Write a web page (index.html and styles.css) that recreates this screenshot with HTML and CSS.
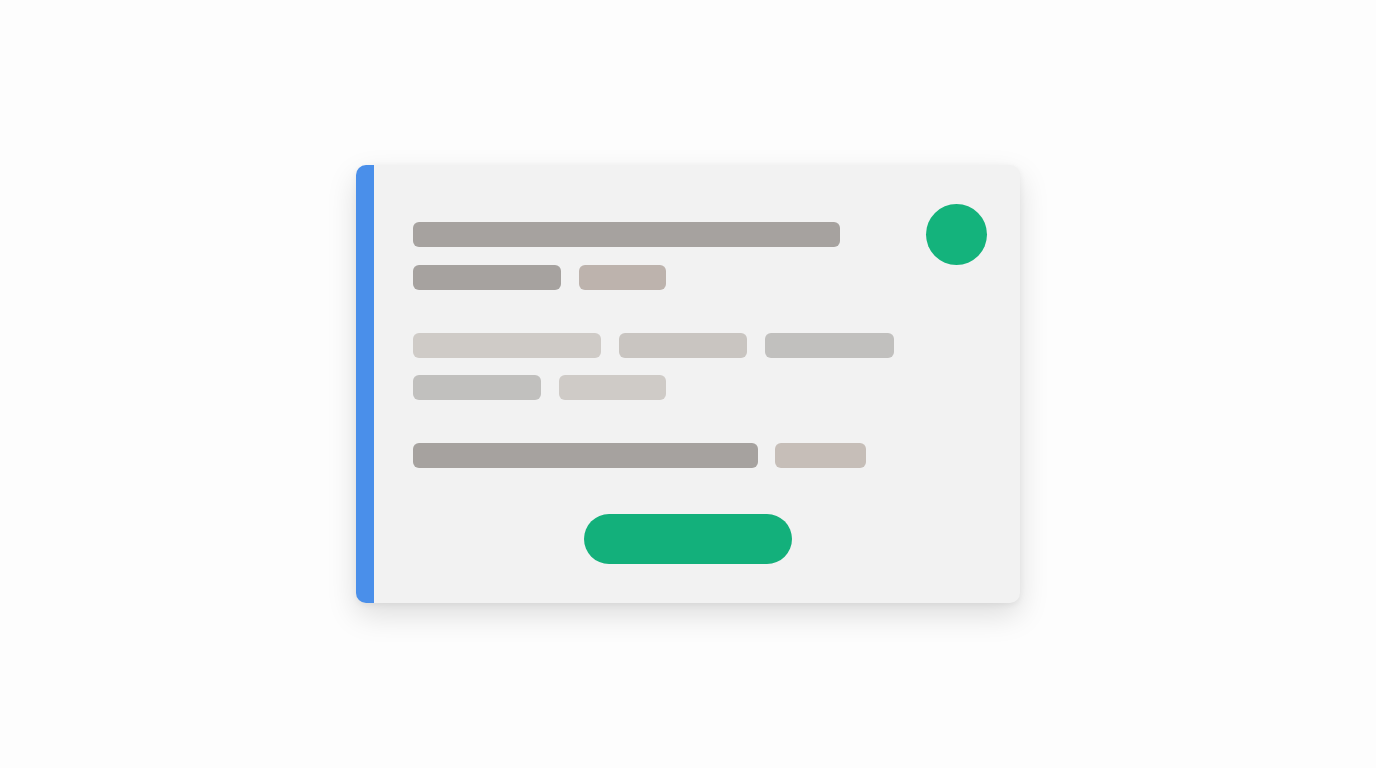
FILE: index.html
```html
<!DOCTYPE html>
<html lang="en">
<head>
<meta charset="utf-8">
<title>Card</title>
<link rel="stylesheet" href="styles.css">
</head>
<body>
<div class="stage">
  <div class="card">
    <div class="card-body">
      <div class="header">
        <div class="group head-group">
          <div class="row"><span class="bar dark" style="width:427px"></span></div>
          <div class="row">
            <span class="bar dark" style="width:148px"></span>
            <span class="bar tan" style="width:87px"></span>
          </div>
        </div>
        <div class="avatar"></div>
      </div>
      <div class="group tags">
        <div class="row">
          <span class="bar light" style="width:188px"></span>
          <span class="bar light2" style="width:128px"></span>
          <span class="bar grey" style="width:129px"></span>
        </div>
        <div class="row tight">
          <span class="bar grey" style="width:128px"></span>
          <span class="bar light" style="width:107px"></span>
        </div>
      </div>
      <div class="row footer-row">
        <span class="bar dark" style="width:345px"></span>
        <span class="bar tan2" style="width:91px"></span>
      </div>
      <div class="actions">
        <button class="btn" type="button" aria-label="Action"></button>
      </div>
    </div>
  </div>
</div>
</body>
</html>
```

FILE: styles.css
```css
* { box-sizing: border-box; }
html, body {
  margin: 0;
  padding: 0;
  background: #fdfdfd;
  font-family: "Inter", "Liberation Sans", sans-serif;
}
.stage {
  width: 1376px;
  height: 768px;
  display: flex;
  align-items: flex-start;
  justify-content: flex-start;
  padding: 165px 0 0 356px;
}
.card {
  width: 664px;
  height: 438px;
  background: #f2f2f2;
  border-left: 18px solid #4a8fea;
  border-radius: 10px;
  box-shadow: 0 12px 30px rgba(0, 0, 0, 0.13), 0 2px 6px rgba(0, 0, 0, 0.06);
}
.card-body {
  padding: 39px 33px 39px 39px;
  display: flex;
  flex-direction: column;
}
.header {
  display: flex;
  justify-content: space-between;
  align-items: flex-start;
}
.group {
  display: flex;
  flex-direction: column;
  gap: 18px;
}
.head-group { margin-top: 18px; }
.tags { margin-top: 43px; gap: 17px; }
.row {
  display: flex;
  gap: 18px;
}
.footer-row { margin-top: 43px; gap: 17px; }
.bar {
  display: block;
  height: 25px;
  border-radius: 6px;
}
.dark { background: #a6a29f; }
.tan { background: #bdb3ad; }
.tan2 { background: #c6beb8; }
.light { background: #cfcbc7; }
.light2 { background: #c9c5c1; }
.grey { background: #c1c0be; }
.avatar {
  width: 61px;
  height: 61px;
  border-radius: 50%;
  background: #14b37c;
}
.actions {
  margin-top: 46px;
  display: flex;
  justify-content: center;
}
.btn {
  width: 208px;
  height: 50px;
  border: 0;
  border-radius: 25px;
  background: #13b07b;
  margin-left: -24px;
}
```
